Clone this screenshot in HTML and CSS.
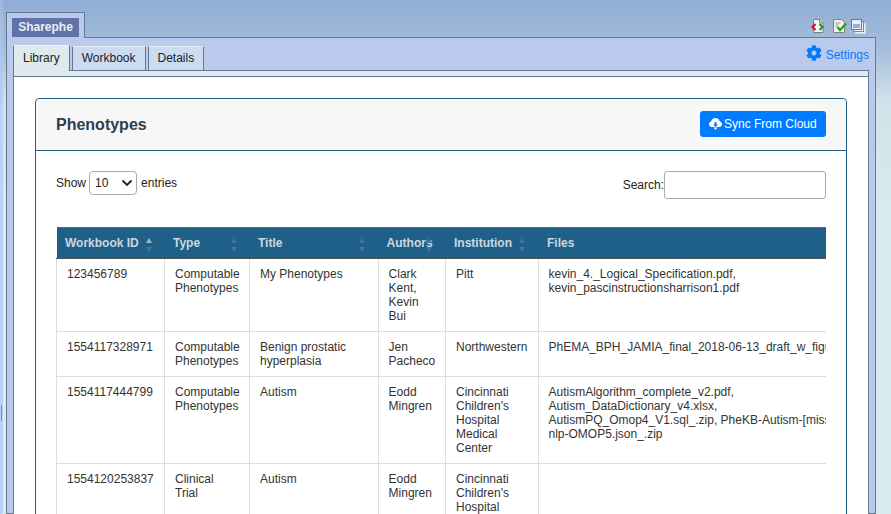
FILE: index.html
```html
<!DOCTYPE html>
<html lang="en">
<head>
    <meta charset="UTF-8">
    <title>Sharephe</title>
    <link rel="stylesheet" href="styles.css">
</head>
<body>
    <div class="edge"><span class="edge-grip"></span></div>
    <div class="workspace">
        <div class="top-row">
            <div class="window-tab"><span class="window-title">Sharephe</span></div>
            <div class="window-icons">
                <svg width="13" height="14" viewBox="0 0 13 14"><path d="M2.500.5h6l3.500 3.500v9.500h-9.500z" fill="#f6f6f2" stroke="#808080"/><path d="M8.500.5v3.500h3.500" fill="#ddd" stroke="#808080"/><path d="M4.500 5L1.500 8l3 3" fill="none" stroke="#c8102e" stroke-width="2.200"/><path d="M8.500 5l3 3-3 3" fill="none" stroke="#1f8a2e" stroke-width="2"/></svg>
                <svg width="14" height="14" viewBox="0 0 14 14"><path d="M.5.5h8l3 3v10h-11z" fill="#f2f2e8" stroke="#808080"/><path d="M2.500 4h5M2.500 6h3M2.500 8h2" stroke="#999"/><path d="M4.500 8l2.500 3 6-6.500" fill="none" stroke="#2b9a1f" stroke-width="2.200"/></svg>
                <svg width="15" height="15" viewBox="0 0 15 15"><rect x="4.500" y="4.500" width="10" height="10" fill="#eee" stroke="#d8d8d8"/><rect x="2.500" y="2.500" width="10" height="10" fill="#f2f2f2" stroke="#888"/><rect x=".5" y=".5" width="10" height="10" fill="#e8eef8" stroke="#777"/><rect x="2" y="5" width="7" height="4" fill="#8fb0dc"/></svg>
            </div>
        </div>
        <div class="window-body">
            <div class="tabs-row">
                <ul class="tabs">
                    <li class="tab active">Library</li>
                    <li class="tab">Workbook</li>
                    <li class="tab">Details</li>
                </ul>
                <a class="settings">
                    <svg width="16" height="16" viewBox="0 0 512 512"><path fill="#007bff" d="M487 316l-43-25c4-23 4-47 0-70l43-25c5-3 7-9 5-14-11-36-30-68-55-95-4-4-10-5-14-2l-43 25c-18-16-39-28-61-36V24c0-6-4-10-9-11-37-8-75-8-110 0-5 1-9 5-9 11v50c-22 8-43 20-61 36L87 85c-4-3-10-2-14 2-25 27-44 59-55 95-2 5 0 11 5 14l43 25c-4 23-4 47 0 70l-43 25c-5 3-7 9-5 14 11 36 30 68 55 95 4 4 10 5 14 2l43-25c18 16 39 28 61 36v50c0 6 4 10 9 11 37 8 75 8 110 0 5-1 9-5 9-11v-50c22-8 43-20 61-36l43 25c4 3 10 2 14-2 25-27 44-59 55-95 2-5 0-11-5-14zM256 336c-44 0-80-36-80-80s36-80 80-80 80 36 80 80-36 80-80 80z"/></svg>
                    <span class="settings-label">Settings</span>
                </a>
            </div>
            <div class="tab-panel">
                <div class="panel-inner">
                    <div class="card">
                        <div class="card-header">
                            <h2>Phenotypes</h2>
                            <button class="sync-btn">
                                <svg width="13" height="12" viewBox="0 0 13 12"><path fill="#fff" d="M3 9C1.300 9 0 7.800 0 6.200 0 4.900.9 3.800 2.200 3.500 2.600 1.500 4.300 0 6.500 0c2.100 0 3.800 1.400 4.300 3.400C12.100 3.700 13 4.800 13 6.200 13 7.800 11.700 9 10 9z"/><path fill="#007bff" d="M5.500 4h2v2.500h1.500L6.500 9 4 6.500h1.500z"/><path fill="#fff" d="M4.500 9.500h4L6.500 12z"/></svg>
                                Sync From Cloud
                            </button>
                        </div>
                        <div class="card-body">
                            <div class="table-controls">
                                <label class="length">Show
                                    <span class="select-box">10
                                        <svg width="12" height="8" viewBox="0 0 12 8"><path d="M1.500 1.500L6 6l4.500-4.500" fill="none" stroke="#222" stroke-width="1.800"/></svg>
                                    </span>
                                    entries</label>
                                <label class="search">Search:<span class="search-input"></span></label>
                            </div>
                            <div class="table-wrap">
                                <table>
                                    <colgroup>
                                        <col class="c-id"><col class="c-type"><col class="c-title"><col class="c-authors"><col class="c-inst"><col class="c-files">
                                    </colgroup>
                                    <thead>
                                        <tr>
                                            <th>Workbook ID<span class="sort asc"></span></th>
                                            <th>Type<span class="sort"></span></th>
                                            <th>Title<span class="sort"></span></th>
                                            <th>Authors<span class="sort"></span></th>
                                            <th>Institution<span class="sort"></span></th>
                                            <th>Files</th>
                                        </tr>
                                    </thead>
                                    <tbody>
                                        <tr>
                                            <td>123456789</td>
                                            <td>Computable Phenotypes</td>
                                            <td>My Phenotypes</td>
                                            <td>Clark Kent, Kevin Bui</td>
                                            <td>Pitt</td>
                                            <td>kevin_4._Logical_Specification.pdf,<br>kevin_pascinstructionsharrison1.pdf</td>
                                        </tr>
                                        <tr>
                                            <td>1554117328971</td>
                                            <td>Computable Phenotypes</td>
                                            <td>Benign prostatic hyperplasia</td>
                                            <td>Jen Pacheco</td>
                                            <td>Northwestern</td>
                                            <td>PhEMA_BPH_JAMIA_final_2018-06-13_draft_w_figures.docx</td>
                                        </tr>
                                        <tr>
                                            <td>1554117444799</td>
                                            <td>Computable Phenotypes</td>
                                            <td>Autism</td>
                                            <td>Eodd Mingren</td>
                                            <td>Cincinnati Children's Hospital Medical Center</td>
                                            <td>AutismAlgorithm_complete_v2.pdf,<br>Autism_DataDictionary_v4.xlsx,<br>AutismPQ_Omop4_V1.sql_.zip, PheKB-Autism-[missing]<br>nlp-OMOP5.json_.zip</td>
                                        </tr>
                                        <tr>
                                            <td>1554120253837</td>
                                            <td>Clinical Trial</td>
                                            <td>Autism</td>
                                            <td>Eodd Mingren</td>
                                            <td>Cincinnati Children's Hospital Medical Center</td>
                                            <td></td>
                                        </tr>
                                    </tbody>
                                </table>
                            </div>
                        </div>
                    </div>
                </div>
            </div>
        </div>
    </div>
</body>
</html>
```

FILE: styles.css
```css
* {
    margin: 0;
    padding: 0;
    box-sizing: border-box;
    font-family: "Liberation Sans", Arial, sans-serif;
}
body {
    width: 891px;
    height: 514px;
    overflow: hidden;
    display: flex;
    background: linear-gradient(to bottom, #8fadd4 0, #a5bedb 50px, #d0e3ea 100px, #d8ebef 220px);
}
.edge {
    width: 3px;
    flex-shrink: 0;
    background: linear-gradient(to bottom, #9db8dc 0, #bcd2f4 110px);
    display: flex;
    align-items: flex-end;
    padding-bottom: 93px;
    padding-left: 1px;
}
.edge-grip {
    width: 1px;
    height: 16px;
    background: #6c8fc4;
}
.workspace {
    width: 870px;
    flex-shrink: 0;
    margin-left: 3px;
    padding-top: 12px;
    display: flex;
    flex-direction: column;
}
.top-row {
    display: flex;
    justify-content: space-between;
    height: 25px;
}
.window-tab {
    width: 79px;
    height: 26px;
    padding: 5px 0 0 5px;
    background: #b9caed;
    border: 1px solid #64788f;
    border-bottom: none;
    position: relative;
    z-index: 1;
}
.window-title {
    display: block;
    width: 67px;
    height: 19px;
    background: #6073a8;
    color: #e9edf6;
    font-size: 12px;
    font-weight: bold;
    line-height: 19px;
    text-align: center;
}
.window-icons {
    display: flex;
    align-items: flex-start;
    padding: 7px 10px 0 0;
}
.window-icons svg:first-child {
    margin-right: 9px;
}
.window-icons svg:nth-child(2) {
    margin-right: 4px;
}
.window-body {
    flex: 1;
    min-height: 0;
    background: #b9caed;
    border: 1px solid #64788f;
    padding: 0 6px;
}
.tabs-row {
    display: flex;
    justify-content: space-between;
    height: 32px;
    padding-top: 7px;
}
.tabs {
    display: flex;
    list-style: none;
    gap: 2px;
    position: relative;
    z-index: 1;
}
.tab {
    height: 25px;
    margin-top: 1px;
    padding: 0 9px;
    font-size: 12px;
    line-height: 23px;
    color: #222;
    background: #cddbf1;
    border: 1px solid #64788f;
    border-top-color: #e8eef8;
}
.tab.active {
    height: 26px;
    margin-top: 0;
    line-height: 25px;
    background: #deeaec;
    border-bottom: none;
    border-top-color: #f0f4f8;
}
.settings {
    display: flex;
    align-items: flex-start;
    gap: 4px;
    font-size: 12px;
    color: #007bff;
}
.settings-label {
    margin-top: 3px;
}
.tab-panel {
    background: #deeaec;
    border: 1px solid #64788f;
    padding-top: 5px;
    height: 460px;
}
.panel-inner {
    background: #fff;
    border-top: 1px solid #64788f;
    height: 100%;
    padding: 21px 21px 0;
}
.card {
    border: 1px solid #1f6088;
    border-radius: 4px;
    background: #fff;
}
.card-header {
    height: 52px;
    padding: 12px 20px;
    background: #f7f7f7;
    border-bottom: 1px solid #1f6088;
    display: flex;
    justify-content: space-between;
    align-items: center;
    border-radius: 4px 4px 0 0;
}
.card-header h2 {
    font-size: 16px;
    color: #2c3e50;
}
.sync-btn {
    align-self: flex-start;
    height: 26px;
    width: 126px;
    border: none;
    border-radius: 3px;
    background: #007bff;
    color: #fff;
    font-size: 12px;
    display: flex;
    align-items: center;
    padding-left: 9px;
    gap: 2px;
}
.card-body {
    padding: 20px 20px 0;
}
.table-controls {
    display: flex;
    justify-content: space-between;
    height: 56px;
    font-size: 12px;
    color: #222;
}
.length {
    display: flex;
    gap: 3px;
    align-items: center;
    height: 24px;
}
.select-box {
    width: 48px;
    height: 24px;
    margin-right: 1px;
    border: 1px solid #aaa;
    border-radius: 4px;
    padding: 0 3px 0 5px;
    display: flex;
    align-items: center;
    justify-content: space-between;
}
.search {
    display: flex;
    align-items: center;
    height: 28px;
}
.search-input {
    width: 162px;
    height: 28px;
    border: 1px solid #aaa;
    border-radius: 3px;
}
.table-wrap {
    overflow: hidden;
    width: 770px;
}
table {
    border-collapse: collapse;
    table-layout: fixed;
    width: 1000px;
    font-size: 12px;
    color: #333;
}
.c-id { width: 108px; }
.c-type { width: 85px; }
.c-title { width: 128.600px; }
.c-authors { width: 67.400px; }
.c-inst { width: 93px; }
.c-files { width: 518px; }
th {
    height: 31px;
    background: #1f6088;
    color: #ccd7e0;
    font-weight: bold;
    text-align: left;
    padding: 0 8.500px;
    border-top: 1px solid #666;
    border-bottom: 1px solid #555;
    position: relative;
    white-space: nowrap;
}
td {
    padding: 8px 10px;
    vertical-align: top;
    border: 1px solid #ddd;
    line-height: 14px;
}
td:last-child {
    padding-left: 9.500px;
    white-space: nowrap;
    overflow: hidden;
    border-right: none;
}
.sort {
    position: absolute;
    right: 12px;
    top: 10px;
    width: 7px;
    height: 14px;
}
.sort::before, .sort::after {
    content: "";
    position: absolute;
    left: 0;
    border-left: 3.500px solid transparent;
    border-right: 3.500px solid transparent;
}
.sort::before {
    top: 0;
    border-bottom: 5px solid #3f7699;
}
.sort::after {
    bottom: 0;
    border-top: 5px solid #3f7699;
}
.sort.asc::before {
    border-bottom-color: #9fb8c9;
}
```
